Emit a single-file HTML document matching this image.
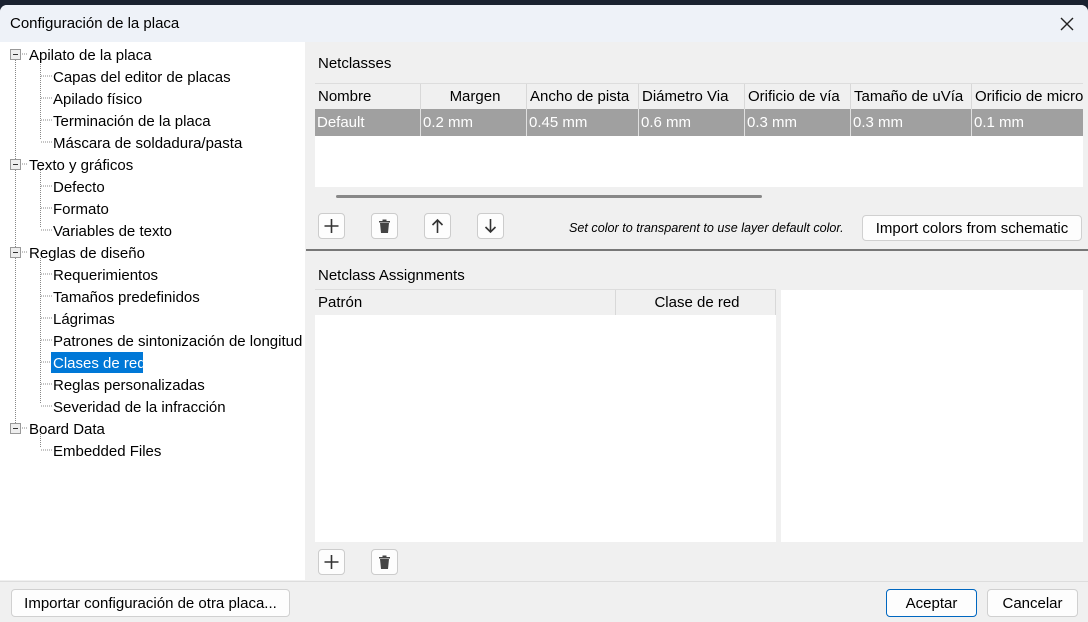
<!DOCTYPE html><html><head><meta charset="utf-8"><style>
*{box-sizing:border-box;margin:0;padding:0}
body{width:1088px;height:622px;background:#1a2230;font-family:"Liberation Sans",sans-serif;font-size:15px;color:#000;position:relative;overflow:hidden}
.a{position:absolute}
.dlg{left:0;top:5px;width:1088px;height:617px;background:#f0f0f0;border-radius:7px 7px 0 0;overflow:hidden}
.title{left:0;top:0;width:1088px;height:37px;background:#eef2f8}
.t{position:absolute;white-space:nowrap}
.tr .t{margin-top:2px}
.btn{position:absolute;background:#fdfdfd;border:1px solid #d0d0d0;border-radius:4px;text-align:center}
.th{position:absolute;top:0;height:25px;line-height:25px;border-right:1px solid #d8d8d8;padding-left:3px;white-space:nowrap;overflow:hidden}
.td{position:absolute;top:25px;height:27px;line-height:27px;border-right:1px solid #e0e0e0;padding-left:2px;color:#fff;white-space:nowrap;overflow:hidden}
.ib{position:absolute;width:27px;height:26px;background:#fdfdfd;border:1px solid #ccc;border-radius:4px}
</style></head><body>
<div class="a dlg">
<div class="a title"><span class="t" style="left:10px;top:10px;font-size:15px">Configuración de la placa</span>
<svg class="a" style="left:1060px;top:12px" width="14" height="14"><path d="M1 1L13 13M13 1L1 13" stroke="#222" stroke-width="1.4"/></svg></div>
<div class="a tr" style="left:0;top:37px;width:305px;height:538px;background:#fff">
<svg class="a" style="left:0;top:0" width="305" height="430">
<g stroke="#888" stroke-dasharray="1,1" fill="none">
<path d="M15.5 18V384M40.5 18V98M40.5 128V186M40.5 216V362M40.5 392V406"/>
<path d="M20 12H28M20 122H28M20 210H28M20 386H28"/>
<path d="M41 34H52M41 56H52M41 78H52M41 100H52M41 144H52M41 166H52M41 188H52M41 232H52M41 254H52M41 276H52M41 298H52M41 320H52M41 342H52M41 364H52M41 408H52"/>
</g>
<g fill="#eee" stroke="#999"><rect x="10.5" y="7.5" width="10" height="10"/><rect x="10.5" y="117.5" width="10" height="10"/><rect x="10.5" y="205.5" width="10" height="10"/><rect x="10.5" y="381.5" width="10" height="10"/></g>
<g stroke="#333"><path d="M13 12.5H18M13 122.5H18M13 210.5H18M13 386.5H18"/></g>
</svg>
<div class="a" style="left:51px;top:310px;width:92px;height:21px;background:#0078d7"></div>
<span class="t" style="left:29px;top:3px">Apilato de la placa</span>
<span class="t" style="left:53px;top:25px">Capas del editor de placas</span>
<span class="t" style="left:53px;top:47px">Apilado físico</span>
<span class="t" style="left:53px;top:69px">Terminación de la placa</span>
<span class="t" style="left:53px;top:91px">Máscara de soldadura/pasta</span>
<span class="t" style="left:29px;top:113px">Texto y gráficos</span>
<span class="t" style="left:53px;top:135px">Defecto</span>
<span class="t" style="left:53px;top:157px">Formato</span>
<span class="t" style="left:53px;top:179px">Variables de texto</span>
<span class="t" style="left:29px;top:201px">Reglas de diseño</span>
<span class="t" style="left:53px;top:223px">Requerimientos</span>
<span class="t" style="left:53px;top:245px">Tamaños predefinidos</span>
<span class="t" style="left:53px;top:267px">Lágrimas</span>
<span class="t" style="left:53px;top:289px">Patrones de sintonización de longitud</span>
<span class="t" style="left:53px;top:311px;color:#fff">Clases de red</span>
<span class="t" style="left:53px;top:333px">Reglas personalizadas</span>
<span class="t" style="left:53px;top:355px">Severidad de la infracción</span>
<span class="t" style="left:29px;top:377px">Board Data</span>
<span class="t" style="left:53px;top:399px">Embedded Files</span>
</div>
<span class="t" style="left:318px;top:50px">Netclasses</span>
<div class="a" style="left:315px;top:78px;width:768px;height:104px;background:#fff;border-top:1px solid #ddd;overflow:hidden">
<div class="a" style="left:0;top:0;width:768px;height:25px;background:#f0f0f0"></div>
<div class="a" style="left:0;top:25px;width:768px;height:27px;background:#a0a0a0"></div>
<div class="th" style="left:0;width:106px">Nombre</div><div class="th" style="left:106px;width:106px;text-align:center">Margen</div>
<div class="th" style="left:212px;width:112px">Ancho de pista</div><div class="th" style="left:324px;width:106px">Diámetro Via</div>
<div class="th" style="left:430px;width:106px">Orificio de vía</div><div class="th" style="left:536px;width:121px">Tamaño de uVía</div>
<div class="th" style="left:657px;width:120px">Orificio de micro</div>
<div class="td" style="left:0;width:106px">Default</div><div class="td" style="left:106px;width:106px">0.2 mm</div>
<div class="td" style="left:212px;width:112px">0.45 mm</div><div class="td" style="left:324px;width:106px">0.6 mm</div>
<div class="td" style="left:430px;width:106px">0.3 mm</div><div class="td" style="left:536px;width:121px">0.3 mm</div>
<div class="td" style="left:657px;width:120px">0.1 mm</div>
</div>
<div class="a" style="left:336px;top:190px;width:426px;height:3px;background:#888;border-radius:2px"></div>
<div class="ib" style="left:318px;top:208px"><svg width="25" height="24"><path d="M12.5 5V19M5.5 12H19.5" stroke="#333" stroke-width="1.6"/></svg></div>
<div class="ib" style="left:371px;top:208px"><svg width="25" height="24"><path d="M8 9h9l-1 10h-7z M7 7h11v1.5H7z M10.5 5.5h4v1.5h-4z" fill="#444"/></svg></div>
<div class="ib" style="left:424px;top:208px"><svg width="25" height="24"><path d="M12.5 6V19M7.5 11l5-5 5 5" stroke="#333" stroke-width="1.6" fill="none"/></svg></div>
<div class="ib" style="left:477px;top:208px"><svg width="25" height="24"><path d="M12.5 5V18M7.5 13l5 5 5-5" stroke="#333" stroke-width="1.6" fill="none"/></svg></div>
<span class="t" style="left:569px;top:216px;font-size:12.6px;font-style:italic">Set color to transparent to use layer default color.</span>
<div class="btn" style="left:862px;top:210px;width:220px;height:26px;line-height:25px">Import colors from schematic</div>
<div class="a" style="left:306px;top:244px;width:782px;height:2px;background:#777"></div>
<span class="t" style="left:318px;top:262px">Netclass Assignments</span>
<div class="a" style="left:315px;top:284px;width:461px;height:253px;background:#fff;border-top:1px solid #ddd">
<div class="th" style="left:0;width:301px;background:#f0f0f0">Patrón</div>
<div class="th" style="left:301px;width:160px;background:#f0f0f0;text-align:center">Clase de red</div></div>
<div class="a" style="left:781px;top:285px;width:302px;height:252px;background:#fff"></div>
<div class="ib" style="left:318px;top:544px"><svg width="25" height="24"><path d="M12.5 5V19M5.5 12H19.5" stroke="#333" stroke-width="1.6"/></svg></div>
<div class="ib" style="left:371px;top:544px"><svg width="25" height="24"><path d="M8 9h9l-1 10h-7z M7 7h11v1.5H7z M10.5 5.5h4v1.5h-4z" fill="#444"/></svg></div>
<div class="a" style="left:0;top:576px;width:1088px;height:1px;background:#ddd"></div>
<div class="btn" style="left:11px;top:584px;width:279px;height:28px;line-height:27px">Importar configuración de otra placa...</div>
<div class="btn" style="left:886px;top:584px;width:91px;height:28px;line-height:27px;border-color:#0067c0">Aceptar</div>
<div class="btn" style="left:987px;top:584px;width:91px;height:28px;line-height:27px">Cancelar</div>
</div>
</body></html>
